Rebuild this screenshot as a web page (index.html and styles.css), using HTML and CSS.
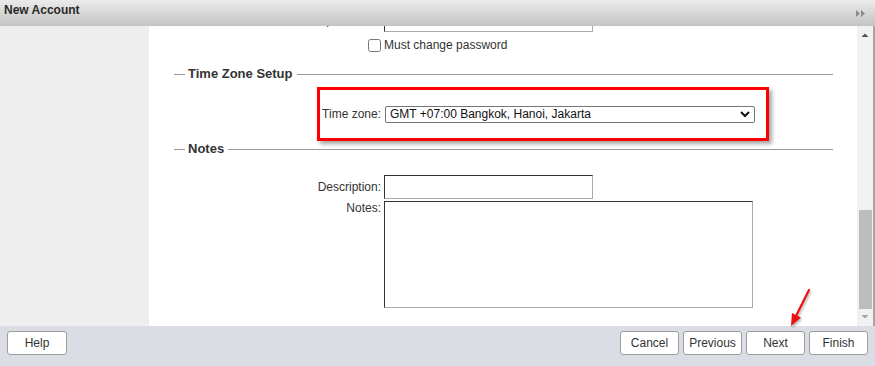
FILE: index.html
```html
<!DOCTYPE html>
<html lang="en">
<head>
<meta charset="utf-8">
<title>New Account</title>
<link rel="stylesheet" href="styles.css">
</head>
<body>
<div class="window">
  <header class="titlebar">
    <span class="title">New Account</span>
    <svg class="collapse" width="10" height="7" viewBox="0 0 10 7"><polygon points="0,0 4,3.5 0,7" fill="#8a8a8a"/><polygon points="5,0 9,3.5 5,7" fill="#8a8a8a"/></svg>
  </header>
  <div class="body">
    <aside class="sidebar"></aside>
    <main class="content">
      <div class="scroller">
        <div class="row">
          <label class="lbl">Confirm password:</label>
          <input class="txt" type="password">
        </div>
        <div class="row check-row">
          <input class="check" type="checkbox" id="mcp">
          <label for="mcp">Must change password</label>
        </div>

        <section class="group">
          <div class="legend"><span class="line-s"></span><span class="legend-text">Time Zone Setup</span><span class="line"></span></div>
          <div class="highlight">
            <label class="tz-lbl">Time zone:</label>
            <div class="select-wrap">
              <select class="select"><option>GMT +07:00 Bangkok, Hanoi, Jakarta</option></select>
              <svg class="chev" width="10" height="7" viewBox="0 0 10 7"><polyline points="1,1 5,5 9,1" fill="none" stroke="#111" stroke-width="2"/></svg>
            </div>
          </div>
        </section>

        <section class="group">
          <div class="legend"><span class="line-s"></span><span class="legend-text">Notes</span><span class="line"></span></div>
          <div class="row desc-row">
            <label class="lbl g">Description:</label>
            <input class="txt" type="text">
          </div>
          <div class="row notes-row">
            <label class="lbl g">Notes:</label>
            <textarea class="area"></textarea>
          </div>
        </section>
      </div>
    </main>
    <div class="scrollbar">
      <div class="sb-btn"><svg width="16" height="17" viewBox="0 0 16 17"><polygon points="4.5,11 11.5,11 8,7.5" fill="#505050"/></svg></div>
      <div class="track"><div class="thumb"></div></div>
      <div class="sb-btn"><svg width="16" height="17" viewBox="0 0 16 17"><polygon points="4.5,6 11.5,6 8,9.5" fill="#a3a3a3"/></svg></div>
    </div>
  </div>
  <footer class="footer">
    <button class="btn help">Help</button>
    <div class="actions">
      <button class="btn">Cancel</button>
      <button class="btn">Previous</button>
      <button class="btn">Next</button>
      <button class="btn">Finish</button>
    </div>
  </footer>
  <svg class="pointer" width="36" height="44" viewBox="0 0 36 44">
    <line x1="29" y1="4" x2="16.4" y2="29.3" stroke="#ee1010" stroke-width="2.2" stroke-linecap="round"/>
    <polygon points="11,40 21,31.5 12,27" fill="#ee1010"/>
  </svg>
</div>
</body>
</html>
```

FILE: styles.css
```css
html, body {
  margin: 0;
  padding: 0;
  background: #fff;
}
body {
  font-family: "Liberation Sans", Arial, sans-serif;
  font-size: 12px;
  color: #333;
}
.window {
  position: relative;
  width: 875px;
  height: 366px;
  display: flex;
  flex-direction: column;
  overflow: hidden;
}
.titlebar {
  flex: none;
  height: 26px;
  box-sizing: border-box;
  padding: 3px 9px 0 4px;
  display: flex;
  align-items: flex-start;
  justify-content: space-between;
  background: linear-gradient(#ebebeb, #c3c3c3);
}
.title {
  font-weight: bold;
  font-size: 12px;
  line-height: 14px;
  color: #2a2a2a;
}
.collapse {
  margin-top: 7px;
}
.body {
  flex: 1;
  min-height: 0;
  display: flex;
  border-right: 2px solid #a4a4a4;
}
.sidebar {
  flex: none;
  width: 149px;
  background: #eeeeee;
}
.content {
  flex: 1;
  overflow: hidden;
  background: #fff;
}
.scroller {
  margin-top: -18px;
}
.row {
  display: flex;
  align-items: center;
  gap: 3px;
}
.lbl {
  width: 232px;
  text-align: right;
  line-height: 14px;
  flex: none;
}
.lbl.g {
  width: 207px;
}
.txt {
  width: 209px;
  height: 24px;
  box-sizing: border-box;
  margin: 0;
  padding: 2px;
  border: 1px solid;
  border-color: #333 #aaa #aaa #333;
  font: inherit;
  background: #fff;
}
.check-row {
  margin-top: 6px;
  padding-left: 219px;
  line-height: 14px;
}
.check {
  width: 13px;
  height: 13px;
  margin: 0;
}
.group {
  margin: 14px 24px 0 25px;
}
.group + .group {
  margin-top: 0;
}
.legend {
  display: flex;
  align-items: center;
  height: 16px;
  gap: 3px;
}
.line-s {
  width: 11px;
  height: 1px;
  background: #999;
}
.line {
  flex: 1;
  height: 1px;
  background: #999;
  margin-left: 1px;
}
.legend-text {
  font-size: 13px;
  font-weight: bold;
  line-height: 16px;
  color: #333;
}
.highlight {
  margin: 5px 0 0 143px;
  width: 452px;
  height: 54px;
  box-sizing: border-box;
  border: 3px solid #ff0000;
  box-shadow: 3px 3px 4px rgba(0, 0, 0, 0.35);
  padding: 16px 0 0 0;
  display: flex;
  align-items: center;
  align-self: flex-start;
  gap: 4px;
}
.highlight {
  align-items: flex-start;
}
.tz-lbl {
  width: 61px;
  text-align: right;
  line-height: 17px;
}
.select-wrap {
  position: relative;
  width: 370px;
  height: 17px;
}
.select {
  appearance: none;
  -webkit-appearance: none;
  width: 370px;
  height: 17px;
  box-sizing: border-box;
  margin: 0;
  padding: 0 0 0 4px;
  border: 1px solid #767676;
  border-radius: 2px;
  background: #fff;
  font: inherit;
  font-size: 12px;
  color: #111;
  line-height: 15px;
}
.chev {
  position: absolute;
  right: 5px;
  top: 5px;
  pointer-events: none;
}
.desc-row {
  margin-top: 18px;
}
.notes-row {
  margin-top: 2px;
  align-items: flex-start;
}
.area {
  width: 369px;
  height: 107px;
  box-sizing: border-box;
  margin: 0;
  padding: 2px;
  border: 1px solid;
  border-color: #333 #aaa #aaa #333;
  resize: none;
  font: inherit;
  overflow: hidden;
}
.scrollbar {
  flex: none;
  width: 16px;
  background: #f1f1f1;
  display: flex;
  flex-direction: column;
}
.sb-btn {
  height: 17px;
  flex: none;
}
.sb-btn svg {
  display: block;
}
.track {
  flex: 1;
  display: flex;
  flex-direction: column;
  justify-content: flex-end;
}
.thumb {
  height: 99px;
  margin: 0 1px 0 2px;
  background: #bdbdbd;
}
.footer {
  flex: none;
  height: 40px;
  box-sizing: border-box;
  padding: 5px 7px 0 7px;
  background: #dadde4;
  display: flex;
  justify-content: space-between;
  align-items: flex-start;
}
.actions {
  display: flex;
  gap: 4px;
}
.btn {
  width: 59px;
  height: 24px;
  margin: 0;
  padding: 0;
  box-sizing: border-box;
  background: #fff;
  border: 1px solid #9d9d9d;
  border-radius: 3px;
  font-family: "Liberation Sans", Arial, sans-serif;
  font-size: 12px;
  color: #333;
}
.btn.help {
  width: 60px;
}
.pointer {
  position: absolute;
  left: 780px;
  top: 286px;
  filter: drop-shadow(1px 2px 1px rgba(0, 0, 0, 0.3));
}
```
